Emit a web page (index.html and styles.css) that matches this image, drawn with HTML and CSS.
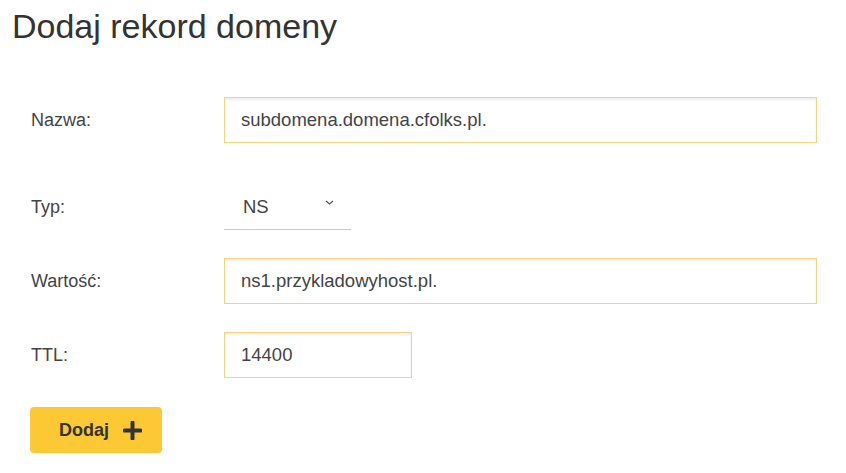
FILE: index.html
```html
<!DOCTYPE html>
<html lang="pl">
<head>
<meta charset="utf-8">
<title>Dodaj rekord domeny</title>
<link rel="stylesheet" href="styles.css">
</head>
<body>
<div class="page">
  <h1 class="title">Dodaj rekord domeny</h1>
  <form class="form">
    <div class="row row-first">
      <label class="label" for="nazwa">Nazwa:</label>
      <input class="field field-wide" id="nazwa" type="text" value="subdomena.domena.cfolks.pl.">
    </div>
    <div class="row">
      <label class="label">Typ:</label>
      <div class="select">
        <span class="select-value">NS</span>
        <svg class="chevron" width="9" height="5" viewBox="0 0 9 5"><path d="M1 1 L4.5 4 L8 1" fill="none" stroke="#555" stroke-width="1.3"/></svg>
      </div>
    </div>
    <div class="row">
      <label class="label" for="wartosc">Wartość:</label>
      <input class="field field-wide" id="wartosc" type="text" value="ns1.przykladowyhost.pl.">
    </div>
    <div class="row">
      <label class="label" for="ttl">TTL:</label>
      <input class="field field-ttl" id="ttl" type="text" value="14400">
    </div>
    <button class="btn" type="button">
      <span>Dodaj</span>
      <svg class="plus" width="19" height="19" viewBox="0 0 19 19"><path d="M9.5 1.5 V17.5 M1.5 9.5 H17.5" stroke="#333" stroke-width="4" stroke-linecap="round"/></svg>
    </button>
  </form>
</div>
</body>
</html>
```
FILE: styles.css
```css
html, body {
  margin: 0;
  padding: 0;
  background: #fff;
}
body {
  font-family: "Liberation Sans", Arial, sans-serif;
  color: #444;
}
.page {
  padding: 6px 30px 0 12px;
}
.title {
  margin: 0;
  font-size: 34px;
  line-height: 40px;
  font-weight: normal;
  color: #333;
}
.form {
  margin-top: 51px;
  padding-left: 18px;
}
.row {
  display: grid;
  grid-template-columns: 194px 1fr;
  align-items: center;
  height: 46px;
  margin-bottom: 28px;
}
.row-first {
  margin-bottom: 41px;
}
.label {
  font-size: 18px;
  padding-left: 1px;
  color: #444;
}
.field {
  box-sizing: border-box;
  height: 46px;
  border: 1px solid #f1d57c;
  border-radius: 0;
  box-shadow: inset 0 2px 3px rgba(0, 0, 0, 0.07);
  padding: 0 16px;
  font-family: "Liberation Sans", Arial, sans-serif;
  font-size: 18.5px;
  color: #444;
  background: #fff;
  outline: none;
}
.field-wide {
  width: 593px;
}
.field-ttl {
  width: 188px;
}
.select {
  box-sizing: border-box;
  width: 127px;
  height: 46px;
  border-bottom: 1px solid #eccb6a;
  display: flex;
  align-items: center;
  justify-content: space-between;
  padding: 0 17px 0 19px;
}
.select-value {
  font-size: 18.5px;
  color: #444;
}
.chevron {
  margin-top: -8px;
}
.btn {
  display: flex;
  align-items: center;
  gap: 14px;
  box-sizing: border-box;
  height: 46px;
  width: 132px;
  margin-top: 29px;
  padding: 0 0 0 29px;
  border: none;
  border-radius: 4px;
  background: #fcc935;
  font-family: "Liberation Sans", Arial, sans-serif;
  font-size: 18px;
  font-weight: bold;
  color: #333;
  cursor: pointer;
}
```
